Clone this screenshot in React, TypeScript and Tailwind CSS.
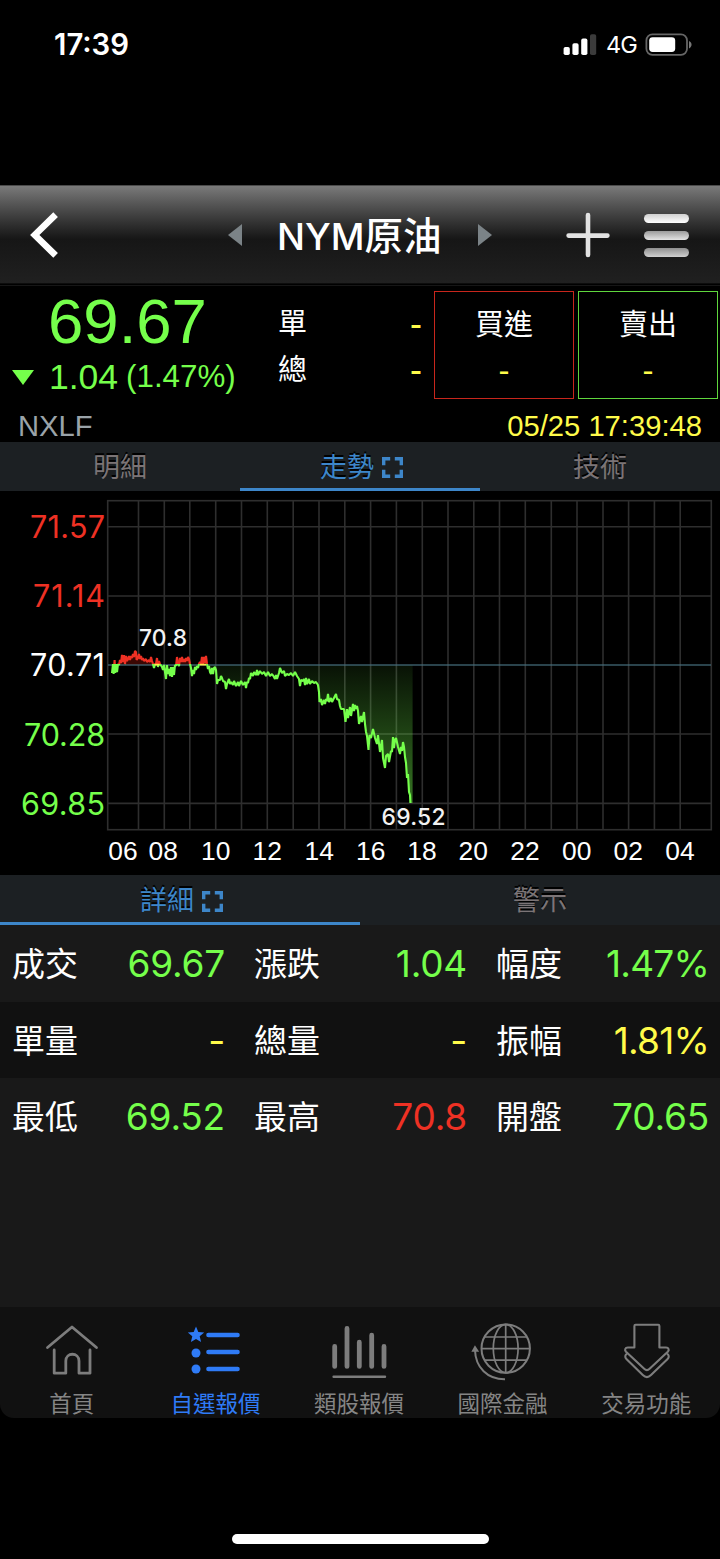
import type { ReactNode } from "react";
import clsx from "clsx";

type Tone = "up" | "down" | "flat";

const toneClass: Record<Tone, string> = {
  up: "text-[#ee3124]",
  down: "text-[#75ff4b]",
  flat: "text-[#fffb4a]",
};

const details: { label: string; value: string; tone: Tone; tight?: boolean }[][] = [
  [
    { label: "成交", value: "69.67", tone: "down" },
    { label: "漲跌", value: "1.04", tone: "down" },
    { label: "幅度", value: "1.47%", tone: "down", tight: true },
  ],
  [
    { label: "單量", value: "-", tone: "flat" },
    { label: "總量", value: "-", tone: "flat" },
    { label: "振幅", value: "1.81%", tone: "flat", tight: true },
  ],
  [
    { label: "最低", value: "69.52", tone: "down" },
    { label: "最高", value: "70.8", tone: "up" },
    { label: "開盤", value: "70.65", tone: "down" },
  ],
];

// chart geometry
const BASE_Y = 665;
const gridX = [
  138.5, 164.3, 189.8, 215.7, 241.5, 267.3, 293.2, 319, 344.8, 370.6, 396.4,
  422.3, 448, 473.8, 499.5, 525.3, 551.3, 577, 603, 628.6, 654.4, 680.2,
];
const gridY = [526.7, 596, 734, 803.4];

const yLabels = [
  { text: "71.57", y: 538, width: 75, fill: "#ee3124" },
  { text: "71.14", y: 607, width: 72, fill: "#ee3124" },
  { text: "70.71", y: 676, width: 75, fill: "#ffffff" },
  { text: "70.28", y: 745.5, width: 81, fill: "#75ff4b" },
  { text: "69.85", y: 814.5, width: 84, fill: "#75ff4b" },
];

const xLabels = [
  { text: "06", x: 123 },
  { text: "08", x: 163.3 },
  { text: "10", x: 215.8 },
  { text: "12", x: 267.3 },
  { text: "14", x: 319.2 },
  { text: "16", x: 370.8 },
  { text: "18", x: 422 },
  { text: "20", x: 473.3 },
  { text: "22", x: 525 },
  { text: "00", x: 576.7 },
  { text: "02", x: 628.3 },
  { text: "04", x: 680 },
];

const series =
  "112,673 113,664 113.6,674 114.6,660 115.2,673 116,664 117,672 118,664 119,665 120,660 121,663 122,655 123,662 124,655 125,664 126,656 127,661 128,659 129,656 130,660 131,656 132,658 133,654 134,657 135,651 136,652 136.6,660 138,658 139,654 140,659 141,656 142,660 143,658 144,661 146,659 147,662 149,660 150,662 151,657 152,661 153,664 154,668 155,664 156,664 157,658 158,667 159,661 160,664 162,667 163,670 164,665 165,672 166,679 167,665 168,674 169,669 170,676 171,667 172,677 173,667 174,675 175,665 176,666 177,657 178,664 179,666 180,658 181,662 182,657 183,662 184,659 185,662 186,658 187,661 188,657 189,659 190,664 191,668 192,676 193,670 194,674 195,667 196,670 197,666 198,668 199,664 200,662 201,664 202,657 203,664 204,657 205,663 206,656 207,664 208,669 209,666 210,672 211,674 212,668 213,674 214,668 215,667 216,670 217,684 218,680 220,680 221,676 222,678 223,681 225,682 226,689 227,684 229,679 230,684 231,682 233,685 234,681 236,686 238,682 239,686 241,681 243,685 245,682 246,688 247,682 248,683 249,678 250,679 251,673 253,676 254,672 256,675 257,670 258,675 260,671 262,674 264,672 266,676 268,672 270,676 272,674 274,677 275,679 276,675 277,679 279,673 280,668 282,673 284,671 285,676 287,674 289,675 291,673 293,676 295,672 297,676 299,679 300,686 301,680 303,681 304,679 305,685 306,678 307,684 309,679 310,684 312,681 314,683 316,682 318,685 319,692 319.5,702 321,699 322,705 324,700 325,704 326,699 327,701 328,694 329,702 331,698 332,702 334,698 336,694 337,699 339,700 340,706 341,709 344,709 345.5,722 347,709 348,718 350,707 351,716 353,704 354,711 355,705 356,709 357,706 358,711 359,724 361,716 362,722 364,712 365,724 366,732 367,736 368.5,750 369.5,735 371,738 373,729 375,738 377,744 378,735 380,752 382,740 383,758 385,768 386,756 388,754 389,762 391,751 392,752 393,737 394,748 395,740 396,738 398,747 400,754 401,747 402,751 403,742 404,747 405,757 406,763 407,778 408,774 409,792 410,795 410.4,803";

const sans = "font-['Liberation_Sans','Noto_Sans_CJK_TC',sans-serif]";
const inter = "font-['Inter','Noto_Sans_CJK_TC',sans-serif]";

function StatusBar() {
  return (
    <div className="flex h-[185px] items-start justify-between pt-[31px] pr-[27px] pl-[54px] text-white">
      <span className="font-['Inter'] text-[29.3px] leading-7 font-semibold">17:39</span>
      <div className="flex h-7 items-center">
        <svg width="34" height="22" viewBox="0 0 34 22" className="mr-[9px]">
          <rect x="0.6" y="13" width="6.2" height="8" rx="1.8" fill="#fff" />
          <rect x="9.4" y="9.2" width="6.2" height="11.8" rx="1.8" fill="#fff" />
          <rect x="18.2" y="4.6" width="6.2" height="16.4" rx="1.8" fill="#fff" />
          <rect x="27" y="0.2" width="6.2" height="20.8" rx="1.8" fill="#3b3b3b" />
        </svg>
        <span className="font-['Inter'] text-[23.5px] leading-7 font-normal tracking-[-0.8px]">4G</span>
        <svg width="48" height="24" viewBox="0 0 48 24" className="ml-2">
          <rect x="1.4" y="1.4" width="40.6" height="20.4" rx="6" fill="none" stroke="#666" strokeWidth="1.8" />
          <rect x="4.2" y="4.2" width="26" height="14.8" rx="3.4" fill="#fff" />
          <path d="M44 8c3.4 1.4 3.4 6 0 7.4z" fill="#777" />
        </svg>
      </div>
    </div>
  );
}

function Header() {
  return (
    <header className="flex h-[101px] flex-col border-t border-[#4a4a4a] bg-black">
      <div className="flex h-[97px] items-center bg-linear-to-b from-[#7a7a7a] via-[#161616] via-55% to-[#202020] text-white">
        <svg width="30" height="46" viewBox="0 0 30 46" className="ml-[30px] shrink-0">
          <path d="M25.6 2.6 4.8 23l20.8 20.4" fill="none" stroke="#fff" strokeWidth="6.6" />
        </svg>
        <svg width="14" height="22" viewBox="0 0 14 22" className="ml-[168px] shrink-0">
          <path d="M14 0v22L0 11z" fill="#7b8387" />
        </svg>
        <h1
          className={clsx(
            inter,
            "ml-[35px] flex w-[166px] items-baseline pt-[4px] text-[37px] leading-[50px] font-medium whitespace-nowrap"
          )}
        >
          <span>NYM</span>
          <span className="text-[38.5px]">原油</span>
        </h1>
        <svg width="14" height="22" viewBox="0 0 14 22" className="ml-[35px] shrink-0">
          <path d="M0 0v22l14-11z" fill="#7b8387" />
        </svg>
        <svg width="44" height="46" viewBox="0 0 44 46" className="ml-[74px] shrink-0">
          <path d="M22 3v40M2.6 23.6h38.8" fill="none" stroke="#e2e2e2" strokeWidth="4.6" strokeLinecap="round" />
        </svg>
        <div className="ml-[34px] flex flex-col gap-[8px] pt-px">
          <div className="h-[9px] w-[45px] rounded-[5px] bg-linear-to-b from-[#cfcfcf] to-white" />
          <div className="h-[9px] w-[45px] rounded-[5px] bg-linear-to-b from-[#9c9c9c] to-[#e4e4e4]" />
          <div className="h-[9px] w-[45px] rounded-[5px] bg-linear-to-b from-[#8f8f8f] to-[#d0d0d0]" />
        </div>
      </div>
      <div className="h-px bg-[#0c0c0c]" />
      <div className="mt-px h-px bg-[#161616]" />
    </header>
  );
}

function QuoteBox({ label, className }: { label: string; className: string }) {
  return (
    <div className={clsx("flex h-[108px] w-[140px] flex-col items-center border", className)}>
      <span className="mt-[15px] text-[29px] leading-[36px] text-white">{label}</span>
      <span className="mt-[12px] text-[33px] leading-[32px] text-[#fffb4a]">-</span>
    </div>
  );
}

function Quote() {
  return (
    <section className={clsx(sans, "flex h-[156px] flex-col bg-black")}>
      <div className="flex h-[116px] items-start">
        <div className="flex w-[254px] flex-col text-[#75ff4b]">
          <div className="ml-[48px] pt-[4px] text-[63.5px] leading-[63px]">69.67</div>
          <div className="flex items-center">
            <svg width="22" height="15" viewBox="0 0 22 15" className="ml-[11.5px]">
              <path d="M0 0h22L11 15z" fill="#75ff4b" />
            </svg>
            <span className="ml-[15.5px] text-[35.5px] leading-[48px]">1.04</span>
            <span className="ml-[8px] text-[31.3px] leading-[48px]">(1.47%)</span>
          </div>
        </div>
        <div className="flex w-[180px] flex-col pt-[15px] pl-[24px] text-[29px] leading-[46px] text-white">
          {["單", "總"].map((label) => (
            <div key={label} className="flex h-[46px] justify-between pr-[12px]">
              <span>{label}</span>
              <span className="text-[36px] text-[#fffb4a]">-</span>
            </div>
          ))}
        </div>
        <div className="flex gap-1 pt-[5px]">
          <QuoteBox label="買進" className="border-[#c8261c]" />
          <QuoteBox label="賣出" className="border-[#5fd63d]" />
        </div>
      </div>
      <div className="flex h-10 justify-between pt-[6px] pr-[18px] pl-[18px] text-[29.2px] leading-[36px]">
        <span className="text-[#9aa3a9]">NXLF</span>
        <span className="text-[#fffb4a]">05/25 17:39:48</span>
      </div>
    </section>
  );
}

function ExpandIcon() {
  return (
    <svg width="21" height="21" viewBox="0 0 21 21" className="ml-[8px]">
      <path
        d="M1.7 8.2V1.7h6.5M12.8 1.7h6.5v6.5M19.3 12.8v6.5h-6.5M8.2 19.3H1.7v-6.5"
        fill="none"
        stroke="#3d86c9"
        strokeWidth="3.4"
      />
    </svg>
  );
}

function Tab({ active, children }: { active?: boolean; children: ReactNode }) {
  return (
    <button
      type="button"
      className={clsx(
        "flex min-w-0 items-center justify-center border-b-[3px] pt-[5px] text-[27px] leading-[40px] [text-shadow:0_-2px_0_#000]",
        active ? "border-[#3d86c9] pl-[3px] text-[#3d86c9]" : "border-transparent text-[#7b7476]"
      )}
    >
      {children}
      {active && <ExpandIcon />}
    </button>
  );
}

function Chart() {
  return (
    <svg width="720" height="384" viewBox="0 491 720 384" className="block bg-black">
      <defs>
        <linearGradient id="line" gradientUnits="userSpaceOnUse" x1="0" y1="640" x2="0" y2="690">
          <stop offset="0.48" stopColor="#ee3124" />
          <stop offset="0.48" stopColor="#75ff4b" />
        </linearGradient>
        <linearGradient id="area" gradientUnits="userSpaceOnUse" x1="0" y1={BASE_Y} x2="0" y2="804">
          <stop offset="0" stopColor="#75ff4b" stopOpacity="0.07" />
          <stop offset="1" stopColor="#75ff4b" stopOpacity="0.46" />
        </linearGradient>
        <clipPath id="above">
          <rect x="108" y="500" width="604" height="165" />
        </clipPath>
        <clipPath id="below">
          <rect x="108" y="665" width="604" height="165" />
        </clipPath>
      </defs>
      <g stroke="#2e2e2e" strokeWidth="1.6" fill="none">
        <rect x="107.7" y="500.7" width="603.6" height="329" />
        {gridX.map((x) => (
          <path key={x} d={`M${x} 501V829`} />
        ))}
        {gridY.map((y) => (
          <path key={y} d={`M108 ${y}H711`} />
        ))}
      </g>
      <polygon points={`112,${BASE_Y} ${series} 412.6,803 412.6,${BASE_Y}`} fill="url(#area)" clipPath="url(#below)" />
      <polygon points={`112,${BASE_Y} ${series} 412,${BASE_Y}`} fill="#3a0703" clipPath="url(#above)" />
      <path d={`M108 ${BASE_Y}H711`} stroke="#46707f" strokeOpacity="0.6" strokeWidth="1.8" />
      <polyline points={series} fill="none" stroke="url(#line)" strokeWidth="2.1" strokeLinejoin="bevel" />
      <path d="M154.5 664.6h5M200 664.6h6" stroke="#ffe84a" strokeWidth="1.8" />
      <g fontFamily="Inter, sans-serif" fontSize="30.5">
        {yLabels.map((l) => (
          <text key={l.text} x={105 - l.width} y={l.y} textLength={l.width} fill={l.fill}>
            {l.text}
          </text>
        ))}
      </g>
      <g fontFamily="Inter, sans-serif" fontSize="22.8" fontWeight="500" fill="#f2f2f2">
        <text x="139" y="645.5" textLength="48">
          70.8
        </text>
        <text x="381.5" y="825" textLength="64">
          69.52
        </text>
      </g>
      <g fontFamily="'Liberation Sans', sans-serif" fontSize="26.4" fill="#fff" textAnchor="middle">
        {xLabels.map((l) => (
          <text key={l.text} x={l.x} y="860">
            {l.text}
          </text>
        ))}
      </g>
    </svg>
  );
}

function DetailTable() {
  return (
    <section className={clsx(inter, "flex h-[382px] flex-col overflow-hidden bg-[#191919]")}>
      {details.map((row, i) => (
        <div
          key={i}
          className={clsx("flex h-[76.5px] w-[726px] shrink-0 items-center pt-[2px]", i % 2 === 1 && "bg-[#111]")}
        >
          {row.map((cell) => (
            <div key={cell.label} className="flex flex-1 items-center justify-between pr-[17px] pl-[12px]">
              <span className="text-[33px] leading-[50px] text-white">{cell.label}</span>
              <span
                className={clsx(
                  "text-[37px] leading-[50px]",
                  cell.tight ? "tracking-[-0.8px]" : "tracking-[-0.2px]",
                  toneClass[cell.tone]
                )}
              >
                {cell.value}
              </span>
            </div>
          ))}
        </div>
      ))}
    </section>
  );
}

function HomeIcon() {
  return (
    <g stroke="#7d7d7d" strokeWidth="2.8" fill="none" strokeLinecap="round" strokeLinejoin="round">
      <path d="M5.5 27.5 30 7l24.5 20.5" />
      <path d="M12.2 30v23.2h11.6V41c0-9 13.2-9 13.2 0v12.2h11V30" />
    </g>
  );
}

function WatchListIcon() {
  return (
    <g fill="#2f7bf6">
      <path d="M11 6.400l2.300 5.500 5.900.5-4.500 3.900 1.400 5.800-5.100-3.100-5.100 3.100 1.400-5.800L2.800 12.400l5.900-.5z" />
      <circle cx="11" cy="33" r="4.5" />
      <circle cx="11" cy="49" r="4.5" />
      <path d="M23.4 15h29.2M23.4 32h29.2M23.4 49h29.2" stroke="#2f7bf6" strokeWidth="4.4" strokeLinecap="round" />
    </g>
  );
}

function SectorIcon() {
  return (
    <g stroke="#7d7d7d" fill="none" strokeLinecap="round">
      <path d="M5.7 26.4v20M18 8.4v38M30.3 22.2v24.2M42.7 15.2v31.2M55 26.4v20" strokeWidth="4.8" />
      <path d="M4.6 56.8h51.4" strokeWidth="2.4" />
    </g>
  );
}

function GlobeIcon() {
  return (
    <g stroke="#7d7d7d" strokeWidth="1.7" fill="none">
      <circle cx="32.7" cy="28.6" r="24.2" strokeWidth="2" />
      <ellipse cx="32.7" cy="28.6" rx="12.4" ry="24.2" />
      <path d="M32.7 4.4v48.4M8.5 28.6h48.4M12 17h41.4M12 40.2h41.4" />
      <path d="M2 30C2.4 47.5 14.5 59.4 32 59.2" strokeWidth="2" />
      <path d="M2 27l-2.2 4h4.8z" fill="#7d7d7d" />
    </g>
  );
}

function TradeIcon() {
  return (
    <g stroke="#7d7d7d" strokeWidth="2.1" fill="none" strokeLinejoin="round">
      <path d="M18.4 27.5V6q0-1.2 1.2-1.2h22.6q1.2 0 1.2 1.2v21.5H50c2.8 0 3.4 2.6 1.8 4.2L33.6 48.8c-1.7 1.6-3.7 1.6-5.4 0L10 31.7c-1.6-1.6-1-4.2 1.8-4.2z" />
      <path d="M11 33.6c-2 1.2-2.4 3.6-.6 5.3l16.4 16.2c2.6 2.5 5.6 2.5 8.2 0l16.6-16.2c1.8-1.7 1.4-4.1-.6-5.3" />
    </g>
  );
}

const navItems = [
  { label: "首頁", icon: <HomeIcon /> },
  { label: "自選報價", icon: <WatchListIcon />, active: true },
  { label: "類股報價", icon: <SectorIcon /> },
  { label: "國際金融", icon: <GlobeIcon /> },
  { label: "交易功能", icon: <TradeIcon /> },
];

function BottomNav() {
  return (
    <nav className={clsx(sans, "flex h-[111px] rounded-b-[14px] bg-[#111] pr-[2px]")}>
      {navItems.map((item) => (
        <div key={item.label} className="flex flex-1 flex-col items-center">
          <svg width="60" height="64" viewBox="0 0 60 64" className="mt-[13px] overflow-visible">
            {item.icon}
          </svg>
          <span
            className={clsx(
              "pt-[3px] text-[22.5px] leading-[36px] whitespace-nowrap",
              item.active ? "text-[#2f7bf6]" : "text-[#858585]"
            )}
          >
            {item.label}
          </span>
        </div>
      ))}
    </nav>
  );
}

export default function App() {
  return (
    <div lang="zh-Hant" className="flex h-[1559px] w-[720px] flex-col overflow-hidden bg-black">
      <StatusBar />
      <Header />
      <Quote />
      <div className={clsx(sans, "grid h-[49px] grid-cols-3 bg-[#1c2023]")}>
        <Tab>明細</Tab>
        <Tab active>走勢</Tab>
        <Tab>技術</Tab>
      </div>
      <Chart />
      <div className={clsx(sans, "grid h-[50px] grid-cols-2 bg-[#1c2023]")}>
        <Tab active>詳細</Tab>
        <Tab>警示</Tab>
      </div>
      <DetailTable />
      <BottomNav />
      <div className="flex flex-1 items-end justify-center pb-[15px]">
        <div className="h-[10px] w-[257px] rounded-full bg-white" />
      </div>
    </div>
  );
}
